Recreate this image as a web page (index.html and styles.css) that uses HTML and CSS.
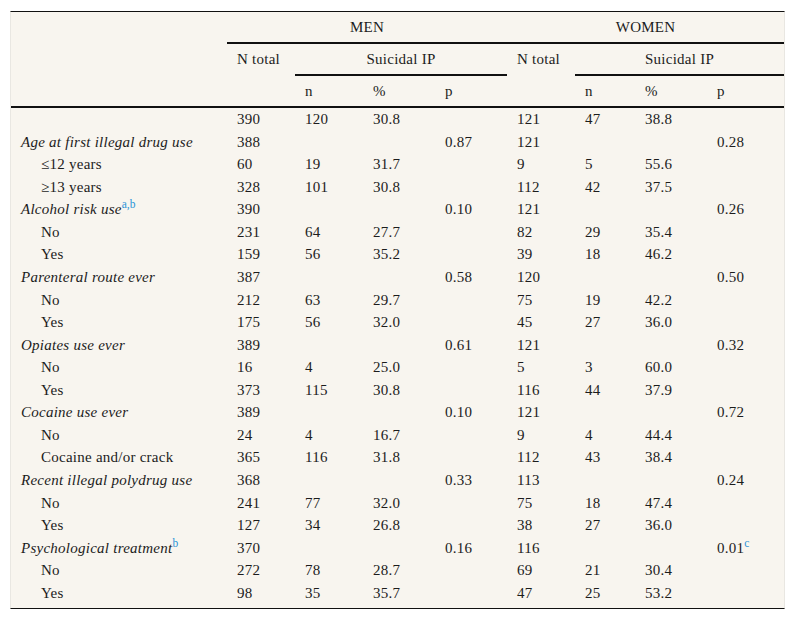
FILE: index.html
```html
<!DOCTYPE html>
<html lang="en">
<head>
<meta charset="utf-8">
<title>Suicidal IP table</title>
<link rel="stylesheet" href="styles.css">
</head>
<body>
<div class="table-wrap">
<table class="data">
<colgroup>
<col class="c-label"><col class="c-68"><col class="c-68"><col class="c-72"><col class="c-72"><col class="c-68"><col class="c-60"><col class="c-72"><col class="c-77">
</colgroup>
<thead>
<tr>
<th></th>
<th colspan="4" class="center rule">MEN</th>
<th colspan="4" class="center rule">WOMEN</th>
</tr>
<tr>
<th></th>
<th>N total</th>
<th colspan="3" class="center rule">Suicidal IP</th>
<th>N total</th>
<th colspan="3" class="center rule">Suicidal IP</th>
</tr>
<tr class="last-head">
<th></th><th></th><th>n</th><th>%</th><th>p</th><th></th><th>n</th><th>%</th><th>p</th>
</tr>
</thead>
<tbody>
<tr><td></td><td>390</td><td>120</td><td>30.8</td><td></td><td>121</td><td>47</td><td>38.8</td><td></td></tr>
<tr><td class="grp">Age at first illegal drug use</td><td>388</td><td></td><td></td><td>0.87</td><td>121</td><td></td><td></td><td>0.28</td></tr>
<tr><td class="sub">≤12 years</td><td>60</td><td>19</td><td>31.7</td><td></td><td>9</td><td>5</td><td>55.6</td><td></td></tr>
<tr><td class="sub">≥13 years</td><td>328</td><td>101</td><td>30.8</td><td></td><td>112</td><td>42</td><td>37.5</td><td></td></tr>
<tr><td class="grp">Alcohol risk use<sup class="fn">a,b</sup></td><td>390</td><td></td><td></td><td>0.10</td><td>121</td><td></td><td></td><td>0.26</td></tr>
<tr><td class="sub">No</td><td>231</td><td>64</td><td>27.7</td><td></td><td>82</td><td>29</td><td>35.4</td><td></td></tr>
<tr><td class="sub">Yes</td><td>159</td><td>56</td><td>35.2</td><td></td><td>39</td><td>18</td><td>46.2</td><td></td></tr>
<tr><td class="grp">Parenteral route ever</td><td>387</td><td></td><td></td><td>0.58</td><td>120</td><td></td><td></td><td>0.50</td></tr>
<tr><td class="sub">No</td><td>212</td><td>63</td><td>29.7</td><td></td><td>75</td><td>19</td><td>42.2</td><td></td></tr>
<tr><td class="sub">Yes</td><td>175</td><td>56</td><td>32.0</td><td></td><td>45</td><td>27</td><td>36.0</td><td></td></tr>
<tr><td class="grp">Opiates use ever</td><td>389</td><td></td><td></td><td>0.61</td><td>121</td><td></td><td></td><td>0.32</td></tr>
<tr><td class="sub">No</td><td>16</td><td>4</td><td>25.0</td><td></td><td>5</td><td>3</td><td>60.0</td><td></td></tr>
<tr><td class="sub">Yes</td><td>373</td><td>115</td><td>30.8</td><td></td><td>116</td><td>44</td><td>37.9</td><td></td></tr>
<tr><td class="grp">Cocaine use ever</td><td>389</td><td></td><td></td><td>0.10</td><td>121</td><td></td><td></td><td>0.72</td></tr>
<tr><td class="sub">No</td><td>24</td><td>4</td><td>16.7</td><td></td><td>9</td><td>4</td><td>44.4</td><td></td></tr>
<tr><td class="sub">Cocaine and/or crack</td><td>365</td><td>116</td><td>31.8</td><td></td><td>112</td><td>43</td><td>38.4</td><td></td></tr>
<tr><td class="grp">Recent illegal polydrug use</td><td>368</td><td></td><td></td><td>0.33</td><td>113</td><td></td><td></td><td>0.24</td></tr>
<tr><td class="sub">No</td><td>241</td><td>77</td><td>32.0</td><td></td><td>75</td><td>18</td><td>47.4</td><td></td></tr>
<tr><td class="sub">Yes</td><td>127</td><td>34</td><td>26.8</td><td></td><td>38</td><td>27</td><td>36.0</td><td></td></tr>
<tr><td class="grp">Psychological treatment<sup class="fn">b</sup></td><td>370</td><td></td><td></td><td>0.16</td><td>116</td><td></td><td></td><td>0.01<sup class="fn">c</sup></td></tr>
<tr><td class="sub">No</td><td>272</td><td>78</td><td>28.7</td><td></td><td>69</td><td>21</td><td>30.4</td><td></td></tr>
<tr><td class="sub">Yes</td><td>98</td><td>35</td><td>35.7</td><td></td><td>47</td><td>25</td><td>53.2</td><td></td></tr>
</tbody>
</table>
</div>
</body>
</html>
```
FILE: styles.css
```css
html, body {
  margin: 0;
  padding: 0;
  background: #ffffff;
}

body {
  font-family: "Liberation Serif", "Times New Roman", serif;
  font-size: 15px;
  letter-spacing: 0.25px;
  color: #1c1c1c;
}

.table-wrap {
  margin: 11px 10px 0 10px;
  width: 773px;
  background: #f8f5ef;
  border-left: 1px solid #e9e7e2;
  border-right: 1px solid #e9e7e2;
  border-top: 1px solid #111;
  border-bottom: 1px solid #111;
  padding-bottom: 4px;
}

.data {
  width: 773px;
  table-layout: fixed;
  border-collapse: separate;
  border-spacing: 0;
}

.c-label { width: 216px; }
.c-68 { width: 68px; }
.c-72 { width: 72px; }
.c-60 { width: 60px; }
.c-77 { width: 77px; }

.data th,
.data td {
  text-align: left;
  vertical-align: top;
  font-weight: normal;
  line-height: 18px;
  padding: 2px 0 2.57px 10px;
  white-space: nowrap;
}

.data thead th {
  padding-top: 6px;
  padding-bottom: 6px;
}

.data thead th.rule {
  border-bottom: 2px solid #111;
}

.data thead .last-head th {
  border-bottom: 2px solid #111;
}

.data th.center {
  text-align: center;
  padding-left: 0;
}

.data td.grp {
  font-style: italic;
}

.data td.sub {
  padding-left: 30px;
}

.fn {
  color: #2b93d8;
  font-size: 11.5px;
  font-style: normal;
  letter-spacing: 0;
  line-height: 0;
  vertical-align: 6px;
}
```
